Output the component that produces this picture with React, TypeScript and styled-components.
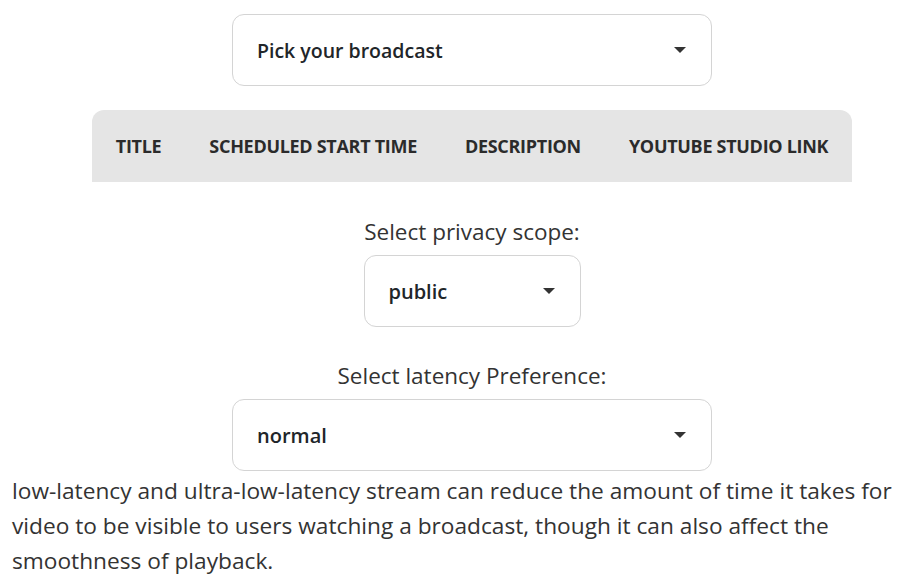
import React from "react";
import styled, { createGlobalStyle } from "styled-components";

const GlobalStyle = createGlobalStyle`
  html, body {
    margin: 0;
    padding: 0;
    background: #ffffff;
    overflow: hidden;
  }
  body {
    font-family: "Open Sans", "Noto Sans", sans-serif;
    color: #212529;
  }
`;

const Page = styled.div`
  width: 920px;
  padding: 14px 0 0 12px;
  display: flex;
  flex-direction: column;
  align-items: center;
`;

const SelectBox = styled.div<{ $width: number }>`
  box-sizing: border-box;
  width: ${p => p.$width}px;
  height: 72px;
  border: 1px solid #d4d4d4;
  border-radius: 12px;
  display: flex;
  align-items: center;
  justify-content: space-between;
  padding: 0 24px 0 24px;
  background: #fff;
`;

const SelectValue = styled.span<{ $weight: number; $size: number }>`
  font-size: ${p => p.$size}px;
  font-weight: ${p => p.$weight};
  color: #212529;
`;

const Caret = styled.span`
  width: 0;
  height: 0;
  border-left: 6px solid transparent;
  border-right: 6px solid transparent;
  border-top: 6px solid #333;
  margin-right: 1px;
`;

const HeaderTable = styled.div`
  margin-top: 24px;
  display: flex;
  align-items: center;
  background: #e5e5e5;
  border-radius: 12px 12px 0 0;
  height: 72px;
`;

const HeaderCell = styled.div`
  padding: 0 24px;
  font-size: 18px;
  font-weight: 700;
  text-transform: uppercase;
  color: #2b2b2b;
  letter-spacing: -0.3px;
`;

const Label = styled.div<{ $top: number }>`
  margin-top: ${p => p.$top}px;
  margin-bottom: 8px;
  font-size: 22.5px;
  color: #333;
`;

const Note = styled.p`
  align-self: stretch;
  margin: 2px 0 0;
  font-size: 22.7px;
  line-height: 35px;
  color: #333;
`;

function Select({ value, width, weight, size }: { value: string; width: number; weight: number; size: number }) {
  return (
    <SelectBox $width={width}>
      <SelectValue $weight={weight} $size={size}>{value}</SelectValue>
      <Caret />
    </SelectBox>
  );
}

export default function App() {
  return (
    <>
      <GlobalStyle />
      <Page>
        <Select value="Pick your broadcast" width={480} weight={600} size={19.5} />
        <HeaderTable>
          <HeaderCell>Title</HeaderCell>
          <HeaderCell>Scheduled Start Time</HeaderCell>
          <HeaderCell>Description</HeaderCell>
          <HeaderCell>YouTube Studio Link</HeaderCell>
        </HeaderTable>
        <Label $top={34}>Select privacy scope:</Label>
        <Select value="public" width={217} weight={600} size={20} />
        <Label $top={33}>Select latency Preference:</Label>
        <Select value="normal" width={480} weight={600} size={20} />
        <Note>
          low-latency and ultra-low-latency stream can reduce the amount of time it takes for video to be
          visible to users watching a broadcast, though it can also affect the smoothness of playback.
        </Note>
      </Page>
    </>
  );
}
